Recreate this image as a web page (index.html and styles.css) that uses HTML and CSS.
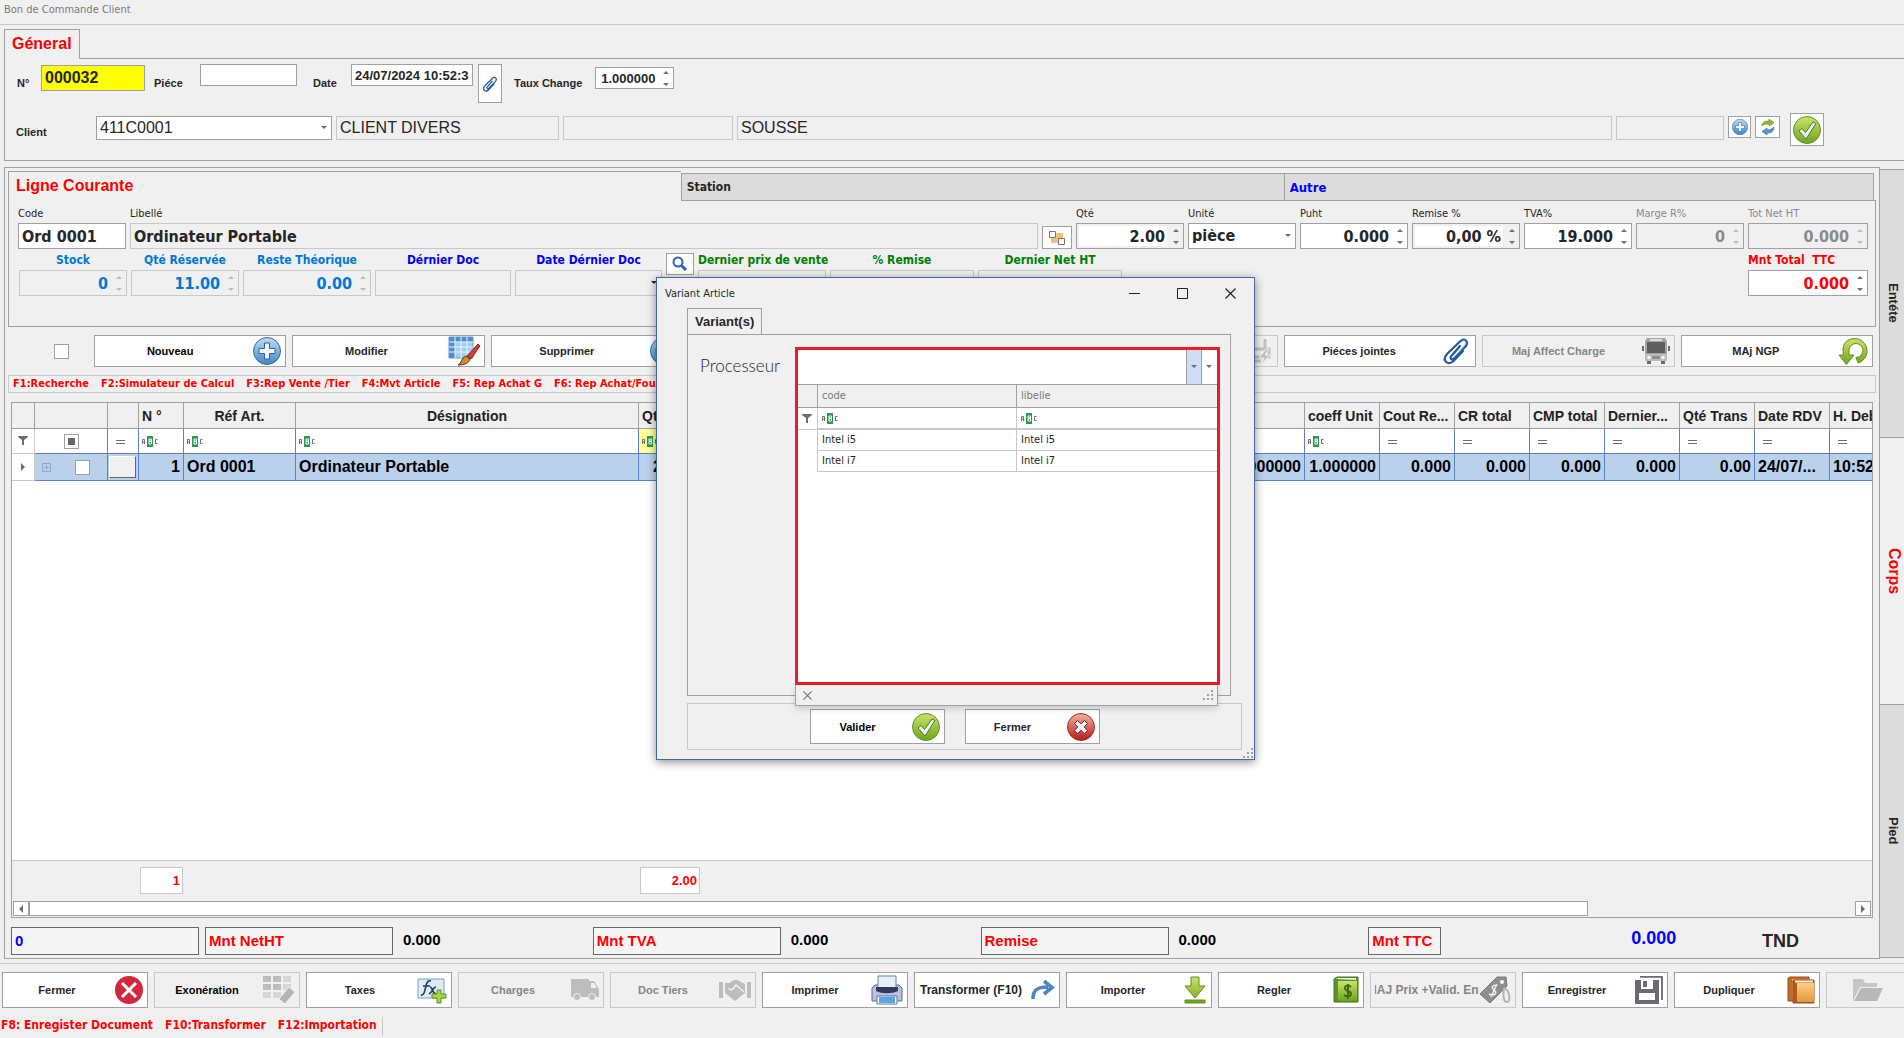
FILE: index.html
```html
<!DOCTYPE html>
<html lang="fr">
<head>
<meta charset="utf-8">
<title>Bon de Commande Client</title>
<link rel="stylesheet" href="styles.css">
</head>
<body>
<svg class="defs" aria-hidden="true">
  <defs>
    <linearGradient id="gBlue" x1="0" y1="0" x2="0" y2="1"><stop offset="0" stop-color="#c3dcf2"/><stop offset="1" stop-color="#3f86c6"/></linearGradient>
    <linearGradient id="gGreen" x1="0" y1="0" x2="0" y2="1"><stop offset="0" stop-color="#cbe36a"/><stop offset="1" stop-color="#6fa51c"/></linearGradient>
    <linearGradient id="gRed" x1="0" y1="0" x2="0" y2="1"><stop offset="0" stop-color="#f3b3a4"/><stop offset="1" stop-color="#b91a12"/></linearGradient>
    <linearGradient id="gGold" x1="0" y1="0" x2="0" y2="1"><stop offset="0" stop-color="#f9cf85"/><stop offset="1" stop-color="#e0983c"/></linearGradient>
  </defs>
  <symbol id="spin" viewBox="0 0 7 15"><path d="M0 3h6L3 0zM0 12h6l-3 3z" fill="currentColor"/></symbol>
  <symbol id="drop" viewBox="0 0 7 4"><path d="M0 0h6L3 3z" fill="currentColor"/></symbol>
  <symbol id="funnel" viewBox="0 0 10 10"><path d="M0 0h10v1L6 4v5H4V4L0 1z" fill="#6e6e6e"/></symbol>
  <symbol id="abc" viewBox="0 0 17 11"><path d="M5 0h6v11H5z" fill="#2f9850"/><path d="M.5 8V3.500h2V8M.5 6h2M15.500 3.500h-2v4h2" fill="none" stroke="#6e6e6e"/><path d="M7 3h2.500v2H7zM7 5.500h2.500V8H7z" fill="none" stroke="#fff"/></symbol>
  <symbol id="eq" viewBox="0 0 10 5"><path d="M0 1.500h9M0 4.500h9" stroke="#6e6e6e"/></symbol>
  <symbol id="plus" viewBox="0 0 28 28"><circle cx="14" cy="14" r="13.500" fill="url(#gBlue)" stroke="#2f6ca8"/><path d="M11.500 6h5v5.500H22v5h-5.500V22h-5v-5.500H6v-5h5.500z" fill="#f4f8fc" stroke="#2c62a0"/></symbol>
  <symbol id="check" viewBox="0 0 28 28"><circle cx="14" cy="14" r="13.500" fill="url(#gGreen)" stroke="#5f9220"/><path d="M6 15l3-2.500 3.500 4L20 6l3 1.500L13 23z" fill="#eef3f6" stroke="#4d7d1c"/></symbol>
  <symbol id="cross" viewBox="0 0 28 28"><circle cx="14" cy="14" r="13.500" fill="url(#gRed)" stroke="#a03028"/><path d="M10.500 7.500l3.500 3.300 3.500-3.300 3 3-3.300 3.500 3.300 3.500-3 3-3.500-3.300-3.500 3.300-3-3 3.300-3.500-3.300-3.500z" fill="#eef1f8" stroke="#6c2a3c"/></symbol>
  <symbol id="close" viewBox="0 0 28 28"><circle cx="14" cy="14" r="14" fill="#d0283e"/><path d="M7 7l14 14M21 7L7 21" stroke="#fff" stroke-width="3"/></symbol>
  <symbol id="clip" viewBox="0 0 28 28"><g fill="none" stroke="#24589c" stroke-width="2.200" stroke-linecap="round"><path d="M18 9L9 19.500c-1.500 2 1 4 3 2L23.500 9.500c4-5-1-9-5-5.500L5 17c-6 7 1.500 12 6.500 7L21 14"/></g><path d="M20 4.500c3-2 5 1 3 3.500L12 20" fill="none" stroke="#9cc2ec"/></symbol>
  <symbol id="editgrid" viewBox="0 0 32 30"><path d="M1 1h24v21H1z" fill="#a4cdee" stroke="#6a9fd0"/><path d="M1 1h24v5H1zM1 1h6v21H1z" fill="#4f8fd0"/><path d="M7 1v21M13 1v21M19 1v21M1 6h24M1 11h24M1 16h24" stroke="#e8f3fc"/><path d="M30 8l2 2-9 13-4-3z" fill="#cf4030" stroke="#8f2a20"/><path d="M18 20l4 3c-1 4-5 6-12 6 4-2 3-7 8-9z" fill="#d98a2e" stroke="#4a3522"/></symbol>
  <symbol id="bolt" viewBox="0 0 28 28"><path d="M8 0v12h12V2M2 12h22v8H2zM6 24h10" fill="none" stroke="#c0c0c0" stroke-width="3"/><path d="M21 12l-7 9h5l-3 7 9-10h-5l4-6z" fill="#c0c0c0" stroke="#f0f0f0"/></symbol>
  <symbol id="bus" viewBox="0 0 28 28"><path d="M5 1h18l2 3v20H3V4z" fill="#a3a3a3"/><path d="M5 5h18v11H5z" fill="#5f5f5f"/><path d="M8 2h12v2H8z" fill="#ddd"/><path d="M3 17h22v7H3z" fill="#bdbdbd"/><path d="M10 19h8v3h-8z" fill="#8c8c8c"/><circle cx="7" cy="20.500" r="1.700" fill="#fff"/><circle cx="21" cy="20.500" r="1.700" fill="#fff"/><path d="M5 24h4v3H5zM19 24h4v3h-4zM0 9h2v5H0zM26 9h2v5h-2z" fill="#6b6b6b"/></symbol>
  <symbol id="redo" viewBox="0 0 30 28"><path d="M9 4A12.500 12.500 0 1 1 20 26l-2-5.500A7 7 0 1 0 11 13v5h5L8.500 27.500 1 18h4.500C4.500 12 5 7 9 4z" fill="url(#gGreen)" stroke="#5c8f1d"/></symbol>
  <symbol id="refresh" viewBox="0 0 16 16"><path d="M2 7c0-4 3-5 7-5V0l5 3.500L9 7V5C6 5 4 5 2 7z" fill="#8dbb2c" stroke="#5c8a1a" stroke-width=".6"/><path d="M14 8c0 5-3 6-7 6v2l-5-3.500L7 9v2c3 0 5-1 7-3z" fill="#5b97d4" stroke="#2f67a8" stroke-width=".6"/></symbol>
  <symbol id="tree" viewBox="0 0 16 14"><path d="M2 2h12v10H2z" fill="#efc27a"/><path d="M.5.500h6v6h-6zM9.500 7.500h6v6h-6z" fill="#fff" stroke="#777"/></symbol>
  <symbol id="search" viewBox="0 0 16 16"><circle cx="6" cy="6" r="4.500" fill="none" stroke="#2763c4" stroke-width="2"/><path d="M9.500 9.500L14 14" stroke="#2763c4" stroke-width="3"/></symbol>
  <symbol id="exo" viewBox="0 0 32 28"><path d="M0 0h8v6H0zM10 0h8v6h-8zM0 8h8v6H0zM10 8h8v6h-8z" fill="#bcbcbc"/><path d="M20 0h8v6h-8zM20 8h8v6h-8zM0 16h8v6H0zM10 16h8v6h-8z" fill="#d6d6d6"/><path d="M26 11l6 5-10 12-6-5z" fill="#b4b4b4" stroke="#f0f0f0"/></symbol>
  <symbol id="fx" viewBox="0 0 30 28"><path d="M1 3h26v19H1z" fill="#dfeaf8" stroke="#7c9cc8"/><path d="M14 5c-3-1-4 1-5 5S7 20 4 19M6 10h7M13 11c3 0 2 7 6 7M19 11c-3 0-4 6-7 7" fill="none" stroke="#1c3a6c" stroke-width="1.600"/><path d="M20 14h4v4h5v4h-5v5h-4v-5h-5v-4h5z" fill="#a6d545" stroke="#5d9122"/></symbol>
  <symbol id="truck" viewBox="0 0 28 22"><path d="M0 0h18v2h5l5 8v8H0z" fill="#bdbdbd"/><path d="M20 4h3l3 5h-6z" fill="#f0f0f0"/><circle cx="6" cy="18" r="3.500" fill="#bdbdbd" stroke="#f0f0f0"/><circle cx="21" cy="18" r="3.500" fill="#bdbdbd" stroke="#f0f0f0"/></symbol>
  <symbol id="hands" viewBox="0 0 32 22"><path d="M0 3h4v16H0zM28 3h4v16h-4zM6 4h4l5-3h3l8 4v9L16 22 6 14z" fill="#bdbdbd"/><path d="M10 9c1 3 4 2 7-3l8 7" fill="none" stroke="#f0f0f0" stroke-width="1.500"/></symbol>
  <symbol id="printer" viewBox="0 0 32 30"><path d="M1 13l3-3h24l3 3v13H1z" fill="#b7c4e0" stroke="#566a9c"/><path d="M7 1h18v13H7z" fill="#e9eef8" stroke="#6b7fae"/><path d="M5 12h22v4c-6 3-16 3-22 0z" fill="#2e3b5a"/><path d="M6 21h20v8H6z" fill="#fff" stroke="#5872aa"/><path d="M8 22h16v6H8z" fill="#58a6e2"/></symbol>
  <symbol id="arrow" viewBox="0 0 24 20"><path d="M2 19C2 10 6 7 17 7M13 1l8 6.500-8 6.500" fill="none" stroke="#4a86c0" stroke-width="3.600"/></symbol>
  <symbol id="down" viewBox="0 0 24 28"><path d="M8 1h8v9h6L12 22 2 10h6zM2 24h20v3H2z" fill="url(#gGreen)" stroke="#5c8f1d"/></symbol>
  <symbol id="book" viewBox="0 0 26 28"><path d="M1 3l3-2h21v25H1z" fill="#5d9130" stroke="#44751c"/><path d="M3 3l2-1h18v2z" fill="#e6f0f4"/><path d="M5 5h19v20H5z" fill="url(#gGreen)"/><path d="M18 11c-2-2-6-2-6 1 0 4 6 2 6 6 0 3-5 3-7 1M15 8v15" fill="none" stroke="#3c6c18" stroke-width="2"/></symbol>
  <symbol id="tag" viewBox="0 0 32 28"><path d="M18 1h9l1 9-17 17L1 18z" fill="#8e8e8e" stroke="#777"/><circle cx="23" cy="6" r="2" fill="#fff"/><path d="M18 10c-3-2-6 1-4 3s4 3 2 5-4 1-6 0M18 8l-6 13" fill="none" stroke="#eee" stroke-width="1.500"/><path d="M25 12c6 2 7 14 3 14s-4-8-3-14" fill="none" stroke="#b5b5b5" stroke-width="2"/></symbol>
  <symbol id="disk" viewBox="0 0 28 28"><path d="M5 .800h22V24" fill="none" stroke="#6a6a74" stroke-width="1.800"/><path d="M0 4h24v24H0z" fill="#6a6a74"/><path d="M6 4h12v9H6zM4 17h16v7H4z" fill="#fff"/><path d="M8 5h4v6H8z" fill="#6a6a74"/></symbol>
  <symbol id="books" viewBox="0 0 28 28"><path d="M1 2l2-1h19v24H1z" fill="#c06a2c" stroke="#9a4c18"/><path d="M5 3h17v20H5z" fill="#e0a050"/><path d="M6 5l2-1h19v23H6z" fill="#b3591e" stroke="#9a4c18"/><path d="M8 4.500h18v2H8z" fill="#f6f0e4"/><path d="M10 7h17v19H10z" fill="url(#gGold)"/></symbol>
  <symbol id="folder" viewBox="0 0 30 22"><path d="M0 0h10l2 4h12v4H7L0 22z" fill="#c6c6c6"/><path d="M8 9h22l-6 13H1z" fill="#b8b8b8"/></symbol>
  <symbol id="grip" viewBox="0 0 11 11"><path d="M8 0h2v2H8zM4 4h2v2H4zM8 4h2v2H8zM0 8h2v2H0zM4 8h2v2H4zM8 8h2v2H8z" fill="#a0a0a0"/></symbol>
  <symbol id="x" viewBox="0 0 11 11"><path d="M.5.500l10 10M10.500.500l-10 10" stroke="currentColor" stroke-width="1.300"/></symbol>
</svg>

<header class="titlebar">Bon de Commande Client</header>

<section class="general">
  <button class="gtab">Géneral</button>
  <div class="gpanel">
    <div class="grow first">
      <label class="lab l-num" for="num">N°</label>
      <div class="box num"><input id="num" value="000032"></div>
      <label class="lab l-piece" for="piece">Piéce</label>
      <div class="box piece"><input id="piece"></div>
      <label class="lab l-date" for="date">Date</label>
      <div class="box date"><input id="date" value="24/07/2024 10:52:33"></div>
      <button class="ibtn attach" aria-label="Pièces jointes"><svg width="16" height="16"><use href="#clip"/></svg></button>
      <label class="lab" for="taux">Taux Change</label>
      <div class="box taux"><input id="taux" value="1.000000"><svg class="sp" width="7" height="15"><use href="#spin"/></svg></div>
    </div>
    <div class="grow client">
      <label class="lab l-client" for="client">Client</label>
      <div class="box code"><select id="client"><option>411C0001</option></select><svg class="dd" width="7" height="4"><use href="#drop"/></svg></div>
      <div class="box off name"><input aria-label="Nom" value="CLIENT DIVERS" readonly></div>
      <div class="box off c3"><input aria-label="Adresse" readonly></div>
      <div class="box off city"><input aria-label="Ville" value="SOUSSE" readonly></div>
      <div class="box off c5"><input aria-label="Code postal" readonly></div>
      <button class="ibtn small" aria-label="Ajouter"><svg width="16" height="16"><use href="#plus"/></svg></button>
      <button class="ibtn small wide" aria-label="Actualiser"><svg width="16" height="16"><use href="#refresh"/></svg></button>
      <button class="ibtn ok" aria-label="Confirmer"><svg width="28" height="28"><use href="#check"/></svg></button>
    </div>
  </div>
</section>

<main class="main">
  <div class="group">
    <nav class="ltabs">
      <button class="lt active">Ligne Courante</button>
      <button class="lt station">Station</button>
      <button class="lt autre">Autre</button>
    </nav>
    <div class="lpanel">
      <div class="frow">
        <div class="f w108"><label for="code">Code</label><div class="box"><input id="code" value="Ord 0001"></div></div>
        <div class="f lib"><label for="lib">Libellé</label><div class="box off"><input id="lib" value="Ordinateur Portable" readonly></div></div>
        <button class="ibtn tree" aria-label="Arborescence"><svg width="16" height="14"><use href="#tree"/></svg></button>
        <div class="f w108"><label for="qte">Qté</label><div class="box inner"><input id="qte" class="r" value="2.00"><svg class="sp" width="7" height="15"><use href="#spin"/></svg></div></div>
        <div class="f w108"><label for="unite">Unité</label><div class="box"><select id="unite"><option>pièce</option></select><svg class="dd" width="7" height="4"><use href="#drop"/></svg></div></div>
        <div class="f w108"><label for="puht">Puht</label><div class="box"><input id="puht" class="r" value="0.000"><svg class="sp" width="7" height="15"><use href="#spin"/></svg></div></div>
        <div class="f w108"><label for="remise">Remise %</label><div class="box inner"><input id="remise" class="r" value="0,00 %"><svg class="sp" width="7" height="15"><use href="#spin"/></svg></div></div>
        <div class="f w108"><label for="tva">TVA%</label><div class="box"><input id="tva" class="r" value="19.000"><svg class="sp" width="7" height="15"><use href="#spin"/></svg></div></div>
        <div class="f w108 dis"><label for="marge">Marge R%</label><div class="box"><input id="marge" class="r" value="0" disabled><svg class="sp" width="7" height="15"><use href="#spin"/></svg></div></div>
        <div class="f w120 dis"><label for="tot">Tot Net HT</label><div class="box"><input id="tot" class="r" value="0.000" disabled><svg class="sp" width="7" height="15"><use href="#spin"/></svg></div></div>
      </div>
      <div class="frow two">
        <div class="f w108 sky"><label for="stock">Stock</label><div class="box off"><input id="stock" class="r" value="0" readonly><svg class="sp" width="7" height="15"><use href="#spin"/></svg></div></div>
        <div class="f w108 sky"><label for="res">Qté Réservée</label><div class="box off"><input id="res" class="r" value="11.00" readonly><svg class="sp" width="7" height="15"><use href="#spin"/></svg></div></div>
        <div class="f w128 sky"><label for="reste">Reste Théorique</label><div class="box off"><input id="reste" class="r" value="0.00" readonly><svg class="sp" width="7" height="15"><use href="#spin"/></svg></div></div>
        <div class="f w135 blue"><label for="ddoc">Dérnier Doc</label><div class="box off"><input id="ddoc" readonly></div></div>
        <div class="f w148 blue"><label for="dddoc">Date Dérnier Doc</label><div class="box off"><input id="dddoc" readonly><svg class="dd dark" width="7" height="4"><use href="#drop"/></svg></div></div>
        <button class="ibtn find" aria-label="Rechercher"><svg width="16" height="16"><use href="#search"/></svg></button>
        <div class="f w128 green"><label for="dpv">Dernier prix de vente</label><div class="box off"><input id="dpv" readonly></div></div>
        <div class="f w144 green"><label for="prem">% Remise</label><div class="box off"><input id="prem" readonly></div></div>
        <div class="f w144 green"><label for="dnet">Dernier Net HT</label><div class="box off"><input id="dnet" readonly></div></div>
        <div class="f w120 red last"><label for="ttc">Mnt Total&nbsp; TTC</label><div class="box"><input id="ttc" class="r" value="0.000"><svg class="sp" width="7" height="15"><use href="#spin"/></svg></div></div>
      </div>
    </div>

    <div class="actions">
      <input type="checkbox" class="cb" aria-label="Tout sélectionner">
      <button class="act black"><span>Nouveau</span><svg width="28" height="28"><use href="#plus"/></svg></button>
      <button class="act"><span>Modifier</span><svg width="32" height="30"><use href="#editgrid"/></svg></button>
      <button class="act"><span>Supprimer</span><svg width="28" height="28"><use href="#plus"/></svg></button>
      <button class="act"><span>Annuler</span></button>
      <button class="act"><span>Valider</span></button>
      <button class="act dis" disabled><span>Article</span><svg width="28" height="28"><use href="#bolt"/></svg></button>
      <button class="act"><span>Piéces jointes</span><svg width="30" height="28"><use href="#clip"/></svg></button>
      <button class="act dis" disabled><span>Maj Affect Charge</span><svg width="28" height="28"><use href="#bus"/></svg></button>
      <button class="act"><span>MAj NGP</span><svg width="30" height="28"><use href="#redo"/></svg></button>
    </div>

    <div class="keys"><span>F1:Recherche</span><span>F2:Simulateur de Calcul</span><span>F3:Rep Vente /Tier</span><span>F4:Mvt Article</span><span>F5: Rep Achat G</span><span>F6: Rep Achat/Four</span></div>

    <div class="grid">
      <table class="lines">
        <colgroup><col class="k23"><col class="k73"><col class="k31"><col class="k45"><col class="k112"><col class="k343"><col class="k62"><col><col class="k75"><col class="k75"><col class="k75"><col class="k75"><col class="k75"><col class="k75"><col class="k75"><col class="k43"></colgroup>
        <thead>
          <tr><th></th><th></th><th></th><th class="lf">N °</th><th>Réf Art.</th><th>Désignation</th><th class="lf">Qté</th><th></th><th class="lf">coeff Unit</th><th class="lf">Cout Re...</th><th class="lf">CR total</th><th class="lf">CMP total</th><th class="lf">Dernier...</th><th class="lf">Qté Trans</th><th class="lf">Date RDV</th><th class="lf cut">H. Debut</th></tr>
        </thead>
        <tbody>
          <tr class="filter"><td class="ct ind"><svg width="10" height="10"><use href="#funnel"/></svg></td><td class="ct"><input type="checkbox" class="cb mixed" checked aria-label="Filtre sélection"></td><td class="e"><svg width="10" height="5"><use href="#eq"/></svg></td><td><svg width="17" height="11"><use href="#abc"/></svg></td><td><svg width="17" height="11"><use href="#abc"/></svg></td><td><svg width="17" height="11"><use href="#abc"/></svg></td><td class="hot"><svg width="17" height="11"><use href="#abc"/></svg></td><td></td><td><svg width="17" height="11"><use href="#abc"/></svg></td><td class="e"><svg width="10" height="5"><use href="#eq"/></svg></td><td class="e"><svg width="10" height="5"><use href="#eq"/></svg></td><td class="e"><svg width="10" height="5"><use href="#eq"/></svg></td><td class="e"><svg width="10" height="5"><use href="#eq"/></svg></td><td class="e"><svg width="10" height="5"><use href="#eq"/></svg></td><td class="e"><svg width="10" height="5"><use href="#eq"/></svg></td><td class="e"><svg width="10" height="5"><use href="#eq"/></svg></td></tr>
          <tr class="data"><td class="ct ind"><svg width="5" height="8" viewBox="0 0 5 8"><path d="M0 0l4 4-4 4z" fill="#6e6e6e"/></svg></td><td><div class="sel"><svg width="9" height="9" viewBox="0 0 9 9"><path d="M.5.500h8v8h-8zM2 4.500h5M4.500 2v5" fill="none" stroke="#8fa6c6"/></svg><input type="checkbox" class="cb" aria-label="Sélection ligne 1"></div></td><td class="btncell"><button aria-label="Détail"></button></td><td class="rt">1</td><td>Ord 0001</td><td>Ordinateur Portable</td><td class="qty">2.00</td><td class="rt">0.000000</td><td class="rt">1.000000</td><td class="rt">0.000</td><td class="rt">0.000</td><td class="rt">0.000</td><td class="rt">0.000</td><td class="rt">0.00</td><td>24/07/...</td><td class="cut">10:52</td></tr>
        </tbody>
      </table>
      <div class="fill"></div>
      <div class="sums"><output class="s1">1</output><output class="s2">2.00</output></div>
      <div class="hscroll"><button aria-label="Gauche"><svg width="5" height="8" viewBox="0 0 5 8"><path d="M4 0L0 4l4 4z" fill="#6e6e6e"/></svg></button><div class="track"><div class="thumb"></div></div><button aria-label="Droite"><svg width="5" height="8" viewBox="0 0 5 8"><path d="M0 0l4 4-4 4z" fill="#6e6e6e"/></svg></button></div>
    </div>

    <div class="totals">
      <div class="cell"><div class="tb zero">0</div></div>
      <div class="cell wide"><div class="tb">Mnt NetHT</div><b>0.000</b></div>
      <div class="cell wide"><div class="tb">Mnt TVA</div><b>0.000</b></div>
      <div class="cell wide"><div class="tb">Remise</div><b>0.000</b></div>
      <div class="cell end"><div class="tb ttc">Mnt TTC</div><b class="grand">0.000</b><b class="cur">TND</b></div>
    </div>
  </div>
  <nav class="side">
    <button>Entéte</button>
    <button class="on">Corps</button>
    <button class="low">Pied</button>
  </nav>
</main>

<footer class="foot">
  <div class="bar">
    <button class="act"><span>Fermer</span><svg width="28" height="28"><use href="#close"/></svg></button>
    <button class="act dis black" disabled><span>Exonération</span><svg width="32" height="28"><use href="#exo"/></svg></button>
    <button class="act"><span>Taxes</span><svg width="30" height="28"><use href="#fx"/></svg></button>
    <button class="act dis" disabled><span>Charges</span><svg width="28" height="22"><use href="#truck"/></svg></button>
    <button class="act dis" disabled><span>Doc Tiers</span><svg width="32" height="22"><use href="#hands"/></svg></button>
    <button class="act"><span>Imprimer</span><svg width="32" height="30"><use href="#printer"/></svg></button>
    <button class="act big"><span>Transformer (F10)</span><svg width="24" height="20"><use href="#arrow"/></svg></button>
    <button class="act"><span>Importer</span><svg width="24" height="28"><use href="#down"/></svg></button>
    <button class="act"><span>Regler</span><svg width="26" height="28"><use href="#book"/></svg></button>
    <button class="act dis big full" disabled><span>MAJ Prix +Valid. Entr</span><svg width="32" height="28"><use href="#tag"/></svg></button>
    <button class="act"><span>Enregistrer</span><svg width="28" height="28"><use href="#disk"/></svg></button>
    <button class="act"><span>Dupliquer</span><svg width="28" height="28"><use href="#books"/></svg></button>
    <button class="act dis lone" disabled aria-label="Ouvrir"><svg width="30" height="22"><use href="#folder"/></svg></button>
  </div>
  <div class="keys2"><span>F8: Enregister Document</span><span>F10:Transformer</span><span>F12:Importation</span></div>
</footer>

<div class="dialog" role="dialog" aria-label="Variant Article">
  <div class="dtitle">
    <span>Variant Article</span>
    <button aria-label="Réduire"><svg width="11" height="11" viewBox="0 0 11 11"><path d="M0 5.500h11" stroke="#222"/></svg></button>
    <button aria-label="Agrandir"><svg width="11" height="11" viewBox="0 0 11 11"><path d="M.5.500h10v10H.5z" fill="none" stroke="#222"/></svg></button>
    <button aria-label="Fermer la fenêtre"><svg width="11" height="11"><use href="#x"/></svg></button>
  </div>
  <button class="dtab">Variant(s)</button>
  <div class="dpanel">
    <label for="proc">Processeur</label>
    <div class="lookup">
      <div class="marked">
        <div class="lrow"><input id="proc"><button class="hl" aria-label="Liste"><svg width="7" height="4"><use href="#drop"/></svg></button><button aria-label="Plus"><svg width="7" height="4"><use href="#drop"/></svg></button></div>
        <table class="opts">
          <colgroup><col class="o20"><col class="o199"><col></colgroup>
          <thead><tr><th></th><th>code</th><th>libelle</th></tr></thead>
          <tbody>
            <tr class="filter"><td class="fun"><svg width="10" height="10"><use href="#funnel"/></svg></td><td><svg width="17" height="11"><use href="#abc"/></svg></td><td><svg width="17" height="11"><use href="#abc"/></svg></td></tr>
            <tr><td></td><td>Intel i5</td><td>Intel i5</td></tr>
            <tr><td></td><td>Intel i7</td><td>Intel i7</td></tr>
          </tbody>
        </table>
      </div>
      <div class="pfoot"><button aria-label="Fermer la liste"><svg width="9" height="9"><use href="#x"/></svg></button><svg width="11" height="11"><use href="#grip"/></svg></div>
    </div>
  </div>
  <div class="dbuttons">
    <button class="act black"><span>Valider</span><svg width="28" height="28"><use href="#check"/></svg></button>
    <button class="act"><span>Fermer</span><svg width="28" height="28"><use href="#cross"/></svg></button>
  </div>
  <svg class="dgrip" width="11" height="11"><use href="#grip"/></svg>
</div>
</body>
</html>
```
FILE: styles.css
```css
* { box-sizing: border-box; }

:root {
  --bg: #f0f0f0;
  --line: #a0a0a0;
  --soft: #c8c8c8;
  --tab: #dcdcdc;
  --arial: "Liberation Sans", Arial, sans-serif;
  --tahoma: "DejaVu Sans Condensed", "Noto Sans", sans-serif;
}

body {
  margin: 0;
  min-height: 100vh;
  display: flex;
  flex-direction: column;
  position: relative;
  background: var(--bg);
  color: #262626;
  font: 11px/14px var(--tahoma);
  overflow: hidden;
}

button, input, select { font: inherit; color: inherit; margin: 0; padding: 0; border-radius: 0; }
button { display: flex; align-items: center; justify-content: center; border: 0; background: none; }
svg { display: block; flex: none; }
.defs { position: absolute; width: 0; height: 0; }

.titlebar {
  height: 25px;
  padding: 3px 4px;
  border-bottom: 1px solid var(--soft);
  color: #7a7a7a;
}

/* Shared field box */
.box { display: flex; align-items: center; border: 1px solid var(--line); background: #fff; }
.box input, .box select {
  flex: 1;
  width: 0;
  min-width: 0;
  height: 100%;
  padding: 0 3px;
  border: 0;
  outline: 0;
  background: transparent;
  appearance: none;
}
.box.off { background: var(--bg); border-color: var(--soft); }
.sp { margin-right: 3px; color: #6e6e6e; }
.off .sp, .dis .sp { color: #bdbdbd; }
.dd { margin-right: 3px; color: #6e6e6e; }
.box .r { text-align: right; padding-right: 2px; }

.ibtn { border: 1px solid var(--line); background: #fff; }

/* General panel */
.general { margin-top: 4px; padding-left: 4px; font-family: var(--arial); }
.gtab {
  position: relative;
  height: 30px;
  padding: 0 7px 2px;
  margin-bottom: -1px;
  border: 1px solid var(--line);
  border-bottom: 0;
  background: var(--bg);
  color: #f00;
  font: bold 16px var(--arial);
}
.gpanel { height: 103px; border: 1px solid var(--line); border-right: 0; padding-top: 5px; }
.grow { display: flex; align-items: flex-start; }
.first { height: 52px; font-weight: bold; }
.lab { font: bold 11px/14px var(--arial); padding-top: 12px; margin-right: 13px; }
.l-num { width: 24px; margin: 0 0 0 12px; }
.l-piece { width: 46px; margin: 0 0 0 9px; }
.l-date { width: 38px; margin: 0 0 0 16px; }
.num { width: 104px; height: 26px; margin-top: 1px; background: #ff0; font-size: 16px; }
.piece { width: 97px; height: 22px; }
.date { width: 122px; height: 22px; font-size: 13px; }
.attach { width: 24px; height: 39px; margin: 0 12px 0 5px; }
.taux { width: 79px; height: 22px; margin-top: 3px; font-size: 13px; }
.taux input { padding: 0 5px; }
.client { font-size: 16px; gap: 4px; padding-right: 80px; }
.client .box { height: 24px; }
.l-client { width: 76px; margin: -3px 0 0 11px; }
.code { width: 236px; }
.name { width: 223px; }
.c3 { width: 170px; }
.city { flex: 1; }
.c5 { width: 108px; }
.small { width: 23px; height: 22px; }
.wide.small { width: 25px; }
.ok { width: 34px; height: 33px; margin: -3px 0 0 6px; }

/* Main group */
.main { flex: 1; display: flex; margin-top: 6px; padding-left: 4px; }
.group {
  flex: 1;
  min-width: 0;
  display: flex;
  flex-direction: column;
  padding: 3px;
  border: 1px solid var(--line);
}
.ltabs { display: flex; align-items: flex-end; padding-right: 2px; margin-bottom: -1px; }
.lt {
  justify-content: flex-start;
  flex: 604;
  height: 28px;
  padding: 0 5px;
  border: 1px solid var(--line);
  background: var(--tab);
  font: bold 13px var(--arial);
}
.lt.active {
  position: relative;
  flex: 671;
  height: 30px;
  padding: 0 7px 2px;
  border-right: 0;
  border-bottom: 0;
  background: var(--bg);
  color: #f00;
  font-size: 16px;
}
.station { font-family: var(--tahoma); font-size: 12px; }
.autre { flex: 590; border-left: 0; color: #00f; font-family: var(--tahoma); }
.lpanel { height: 127px; border: 1px solid var(--line); padding: 6px 7px 0 9px; }
.frow { display: flex; gap: 4px; align-items: flex-end; }
.f { display: flex; flex-direction: column; gap: 2px; }
.f label { white-space: nowrap; }
.f .box { height: 26px; font-weight: bold; font-size: 16px; }
.f .sp { margin-left: 6px; }
.inner { background: var(--bg); padding: 2px 0 2px 2px; }
.inner input { background: #fff; }
.w108 { width: 108px; }
.w120 { width: 120px; }
.w128 { width: 128px; }
.w135 { width: 136px; }
.w144 { width: 144px; }
.w148 { width: 147px; }
.lib { flex: 1; }
.tree { width: 30px; height: 23px; }
.dis { color: #8a8a8a; }
.dis .box { background: var(--bg); }
.dis input { color: #8a8a8a; }
.two { margin-top: 3px; padding-left: 1px; align-items: flex-start; }
.two label { font-weight: bold; font-size: 12px; line-height: 16px; text-align: center; }
.sky { color: #0078d7; }
.blue { color: #00f; }
.green { color: #008000; }
.red { color: #f00; }
.dark { color: #222; }
.find { width: 28px; height: 22px; margin-top: 1px; }
.last { margin-left: auto; }
.last label { text-align: left; }

/* Checkboxes */
.cb { appearance: none; flex: none; width: 15px; height: 15px; margin: 0; border: 1px solid var(--line); background: #fff; }
.mixed { background: linear-gradient(#666, #666) center / 7px 7px no-repeat #fff; }

/* Icon buttons */
.act {
  min-width: 0;
  height: 32px;
  padding: 0 4px;
  border: 1px solid var(--line);
  background: #fff;
  font: bold 11px var(--arial);
  white-space: nowrap;
}
.act span { flex: 1; min-width: 0; display: flex; justify-content: center; overflow: hidden; margin-right: 12px; line-height: 16px; }
.act.dis { background: var(--bg); border-color: var(--soft); color: #858585; }
.act.black { color: #000; }
.act.big { font-size: 12px; }

.actions { display: flex; align-items: center; gap: 6px; margin-top: 8px; padding-right: 3px; }
.actions .cb { margin: 0 19px 0 46px; }
.actions .act { flex: 1; }

.keys {
  display: flex;
  gap: 12px;
  height: 18px;
  margin-top: 8px;
  padding: 1px 4px;
  border: 1px solid var(--soft);
  color: #f00;
  font-weight: bold;
}

/* Lines grid */
.grid {
  flex: 1;
  display: flex;
  flex-direction: column;
  margin: 9px 3px 0;
  border: 1px solid var(--line);
}
.lines { width: 100%; table-layout: fixed; border-spacing: 0; font-family: var(--arial); font-weight: bold; color: #000; }
.lines th, .lines td {
  padding: 0 3px;
  border-right: 1px solid var(--line);
  border-bottom: 1px solid var(--line);
  overflow: hidden;
  white-space: nowrap;
}
.lines th:last-child, .lines td:last-child { border-right: 0; }
.lines th { height: 26px; background: var(--bg); font-size: 14px; color: #222; }
.lines th.lf { text-align: left; }
.lines td { border-color: #5f7fc4; background: #fff; }
.lines .filter td { height: 25px; }
.lines .filter .hot { background: #ffff99; }
.lines .data td { height: 26px; background: #bad1ec; font-size: 16px; line-height: 20px; }
.lines td.ind, .lines .data .ind { background: #fff; border-bottom-color: var(--soft); border-right-color: var(--soft); }
.lines .rt { text-align: right; }
.lines .qty { padding-left: 14px; }
.lines .cut { padding-right: 0; }
.lines .e { padding-left: 8px; }
.ct svg, .ct .cb { margin: 0 auto; display: block; }
.sel { display: flex; align-items: center; gap: 24px; padding-left: 4px; }
.lines .btncell { padding: 2px 1px; }
.btncell button { width: 27px; height: 22px; background: var(--bg); border: 1px solid #fff; border-right-color: #666; border-bottom-color: #666; }
.k23 { width: 23px; } .k73 { width: 73px; } .k31 { width: 31px; } .k45 { width: 45px; }
.k112 { width: 112px; } .k343 { width: 343px; } .k62 { width: 62px; } .k75 { width: 75px; } .k43 { width: 42px; }
.fill { flex: 1; background: #fff; }
.sums { display: flex; height: 41px; padding: 6px 0 0 128px; border-top: 1px solid var(--soft); }
.sums output {
  height: 27px;
  padding: 5px 2px;
  border: 1px solid var(--soft);
  background: #fff;
  color: #f00;
  font: bold 13px/16px var(--arial);
  text-align: right;
}
.s1 { width: 43px; }
.s2 { width: 60px; margin-left: 457px; }
.hscroll { display: flex; height: 16px; padding: 0 1px 1px; }
.hscroll button { width: 16px; border: 1px solid var(--line); background: #fff; }
.track { flex: 1; }
.thumb { width: 85.4%; height: 15px; border: 1px solid var(--line); background: #fff; }

/* Totals */
.totals { display: flex; margin: 9px 3px 0; height: 28px; font: bold 15px/26px var(--arial); color: #000; }
.cell { display: flex; width: 194px; }
.cell.wide { flex: 388; }
.cell.end { flex: 505; }
.tb { width: 188px; padding: 0 3px; border: 1px solid #666; background: #f5f5f5; color: #f00; }
.cell b { margin-left: 10px; }
.tb.zero { color: #00f; }
.tb.ttc { width: 73px; }
.cell .grand { margin-left: 190px; color: #00f; font-size: 18px; line-height: 22px; }
.cell .cur { margin: 0 74px 0 auto; color: #262626; font-size: 18px; line-height: 28px; }

/* Vertical tabs */
.side { width: 24px; display: flex; flex-direction: column; margin: 2px 0 1px; }
.side button {
  flex: 268;
  writing-mode: vertical-rl;
  padding-left: 3px;
  border: 1px solid var(--line);
  border-width: 1px 0;
  background: var(--tab);
  font: bold 13px var(--arial);
}
.side .low { flex: 253; }
.side .on { border: 0; background: var(--bg); color: #f00; font-size: 16px; }

/* Footer */
.foot { margin-top: 4px; border-top: 1px solid var(--soft); padding: 8px 0 2px; }
.bar { display: flex; gap: 6px; padding-left: 2px; overflow: hidden; }
.bar .act { flex: 0 0 146px; height: 36px; }
.bar .act span { margin-right: 8px; }
.bar .full span { margin-right: 0; }
.bar .lone { justify-content: flex-start; padding-left: 26px; }
.keys2 {
  display: inline-flex;
  gap: 12px;
  height: 19px;
  margin-top: 9px;
  padding: 0 5px 0 1px;
  border-right: 1px solid var(--soft);
  color: #f00;
  font: bold 12px/17px var(--tahoma);
}

/* Variant dialog */
.dialog {
  position: absolute;
  left: 656px;
  top: 277px;
  width: 599px;
  display: flex;
  flex-direction: column;
  padding: 0 12px 9px 30px;
  border: 1px solid #4468a8;
  background: var(--bg);
  box-shadow: 0 2px 9px rgba(0, 0, 0, .45);
}
.dtitle { display: flex; height: 30px; margin: 0 -12px 0 -22px; }
.dtitle span { flex: 1; line-height: 31px; }
.dtitle button { width: 48px; }
.dtab {
  position: relative;
  align-self: flex-start;
  height: 27px;
  padding: 0 7px 2px;
  margin-bottom: -1px;
  border: 1px solid var(--line);
  border-bottom: 0;
  background: var(--bg);
  font: bold 13px var(--arial);
}
.dpanel { position: relative; height: 362px; margin-right: 11px; padding: 19px 12px; border: 1px solid var(--line); }
.dpanel label { font: 300 17px/24px Lato, sans-serif; }
.lookup {
  position: absolute;
  left: 107px;
  top: 12px;
  width: 425px;
  display: flex;
  flex-direction: column;
}
.marked { height: 338px; border: 3px solid #ed1c24; background: #fff; }
.lrow { display: flex; height: 35px; border-bottom: 1px solid var(--line); }
.lrow input { flex: 1; border: 0; outline: 0; padding: 0 4px; background: #fff; }
.lrow button { width: 15px; color: #6e6e6e; }
.lrow .hl { width: 16px; background: #cfdcf5; border: 1px solid var(--line); border-width: 0 1px; }
.opts { width: 100%; table-layout: fixed; border-spacing: 0; }
.opts th, .opts td { height: 21px; padding: 0 4px; text-align: left; border-right: 1px solid var(--soft); border-bottom: 1px solid var(--soft); }
.opts th { height: 23px; background: var(--bg); border-color: var(--line); color: #777; font-weight: normal; }
.opts th:last-child, .opts td:last-child { border-right: 0; }
.opts .filter td { border-bottom-width: 2px; height: 22px; }
.opts td:first-child { border-bottom: 0; }
.opts .filter .fun { border-bottom: 1px solid var(--soft); }
.o20 { width: 20px; } .o199 { width: 199px; }
.pfoot {
  display: flex;
  align-items: center;
  justify-content: space-between;
  height: 21px;
  margin-right: 2px;
  padding: 0 3px 0 7px;
  border: 1px solid var(--line);
  border-top: 0;
  background: var(--bg);
  box-shadow: 0 3px 6px rgba(0, 0, 0, .15);
  color: #6e6e6e;
}
.dbuttons { display: flex; gap: 20px; height: 47px; margin-top: 7px; padding: 5px 122px; border: 1px solid var(--soft); }
.dbuttons .act { width: 135px; flex: none; height: 35px; }
.dgrip { position: absolute; right: 0; bottom: 0; }
```
